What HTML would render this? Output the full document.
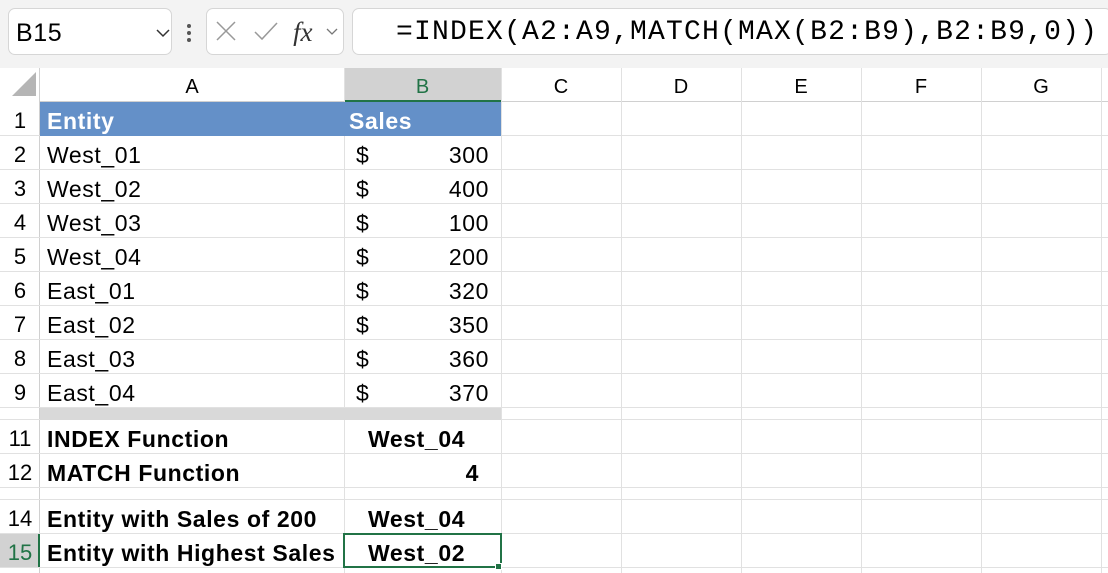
<!DOCTYPE html>
<html><head><style>
*{margin:0;padding:0;box-sizing:border-box}
body{width:1108px;height:573px;overflow:hidden;background:#fff;font-family:"Liberation Sans",sans-serif;position:relative}
.a{position:absolute}
.top{left:0;top:0;width:1108px;height:68px;background:#f3f3f3}
.box{background:#fff;border:1px solid #d6d6d6;border-radius:7px}
.vl{position:absolute;top:68px;bottom:0;width:1px;background:#e1e1e1}
.hl{position:absolute;left:0;right:0;height:1px;background:#e1e1e1}
.t{position:absolute;font-size:23px;letter-spacing:0.6px;color:#000;line-height:34px;padding-top:2px;white-space:nowrap}
.b{font-weight:bold}
.rn{position:absolute;left:0;width:40px;text-align:center;font-size:22px;line-height:34px;padding-top:2px}
.ch{position:absolute;top:68px;height:34px;line-height:34px;text-align:center;font-size:20px;padding-top:2px}
</style></head><body>
<div class="a top"></div>
<div class="a box" style="left:8px;top:8px;width:164px;height:47px"></div>
<div class="t" style="left:16px;top:14px;font-size:25px">B15</div>
<svg class="a" style="left:156px;top:28px" width="14" height="10"><path d="M1 2 L7 8 L13 2" stroke="#333" stroke-width="1.5" fill="none"/></svg>
<div class="a" style="left:187px;top:24px;width:4px;height:4px;background:#555;border-radius:2px"></div>
<div class="a" style="left:187px;top:31px;width:4px;height:4px;background:#555;border-radius:2px"></div>
<div class="a" style="left:187px;top:38px;width:4px;height:4px;background:#555;border-radius:2px"></div>
<div class="a box" style="left:206px;top:8px;width:138px;height:47px"></div>
<svg class="a" style="left:215px;top:20px" width="130" height="26"><path d="M2 2 L20 20 M20 2 L2 20" stroke="#999" stroke-width="1.5"/><path d="M40 12 L47 19 L62 3" stroke="#999" stroke-width="1.5" fill="none"/><text x="78" y="21" font-family="Liberation Serif" font-style="italic" font-size="27" fill="#333">fx</text><path d="M112 9 L117 14 L122 9" stroke="#777" stroke-width="1.3" fill="none"/></svg>
<div class="a box" style="left:352px;top:8px;width:760px;height:47px"></div>
<div class="a" style="left:396px;top:16px;font-family:'Liberation Mono',monospace;font-size:28px;letter-spacing:1.2px;line-height:34px;white-space:nowrap">=INDEX(A2:A9,MATCH(MAX(B2:B9),B2:B9,0))</div>
<div class="a" style="left:0;top:68px;width:1108px;height:34px;background:#fff;border-bottom:1px solid #d0d0d0"></div>
<div class="a" style="left:0;top:68px;width:40px;height:505px;background:#fff;border-right:1px solid #d0d0d0"></div>
<svg class="a" style="left:10px;top:70px" width="30" height="30"><path d="M26 2 L26 26 L2 26 Z" fill="#b5b5b5"/></svg>
<div class="a" style="left:344px;top:68px;width:157px;height:34px;background:#d2d2d2;border-bottom:2px solid #217346"></div>
<div class="a" style="left:0;top:534px;width:40px;height:34px;background:#d2d2d2;border-right:2px solid #217346"></div>
<div class="ch" style="left:40px;width:304px">A</div>
<div class="ch" style="left:344px;width:157px;color:#217346">B</div>
<div class="ch" style="left:501px;width:120px">C</div>
<div class="ch" style="left:621px;width:120px">D</div>
<div class="ch" style="left:741px;width:120px">E</div>
<div class="ch" style="left:861px;width:120px">F</div>
<div class="ch" style="left:981px;width:120px">G</div>
<div class="hl" style="top:135px"></div><div class="hl" style="top:169px"></div><div class="hl" style="top:203px"></div><div class="hl" style="top:237px"></div><div class="hl" style="top:271px"></div><div class="hl" style="top:305px"></div><div class="hl" style="top:339px"></div><div class="hl" style="top:373px"></div><div class="hl" style="top:407px"></div><div class="hl" style="top:419px"></div><div class="hl" style="top:453px"></div><div class="hl" style="top:487px"></div><div class="hl" style="top:499px"></div><div class="hl" style="top:533px"></div><div class="hl" style="top:567px"></div>
<div class="vl" style="left:344px"></div><div class="vl" style="left:501px"></div><div class="vl" style="left:621px"></div><div class="vl" style="left:741px"></div><div class="vl" style="left:861px"></div><div class="vl" style="left:981px"></div><div class="vl" style="left:1101px"></div>
<div class="a" style="left:40px;top:102px;width:461px;height:34px;background:#6490c8"></div>
<div class="a" style="left:40px;top:408px;width:461px;height:12px;background:#d9d9d9"></div>
<div class="rn" style="top:102px">1</div><div class="rn" style="top:136px">2</div><div class="rn" style="top:170px">3</div><div class="rn" style="top:204px">4</div><div class="rn" style="top:238px">5</div><div class="rn" style="top:272px">6</div><div class="rn" style="top:306px">7</div><div class="rn" style="top:340px">8</div><div class="rn" style="top:374px">9</div>
<div class="rn" style="top:420px">11</div><div class="rn" style="top:454px">12</div><div class="rn" style="top:500px">14</div><div class="rn" style="top:534px;color:#217346">15</div>
<div class="t b" style="left:47px;top:102px;color:#fff">Entity</div>
<div class="t b" style="left:349px;top:102px;color:#fff">Sales</div>
<div class="t" style="left:47px;top:136px">West_01</div><div class="t" style="left:47px;top:170px">West_02</div><div class="t" style="left:47px;top:204px">West_03</div><div class="t" style="left:47px;top:238px">West_04</div><div class="t" style="left:47px;top:272px">East_01</div><div class="t" style="left:47px;top:306px">East_02</div><div class="t" style="left:47px;top:340px">East_03</div><div class="t" style="left:47px;top:374px">East_04</div>
<div class="t" style="left:356px;top:136px">$</div><div class="t" style="left:356px;top:170px">$</div><div class="t" style="left:356px;top:204px">$</div><div class="t" style="left:356px;top:238px">$</div><div class="t" style="left:356px;top:272px">$</div><div class="t" style="left:356px;top:306px">$</div><div class="t" style="left:356px;top:340px">$</div><div class="t" style="left:356px;top:374px">$</div>
<div class="t" style="right:619px;top:136px">300</div><div class="t" style="right:619px;top:170px">400</div><div class="t" style="right:619px;top:204px">100</div><div class="t" style="right:619px;top:238px">200</div><div class="t" style="right:619px;top:272px">320</div><div class="t" style="right:619px;top:306px">350</div><div class="t" style="right:619px;top:340px">360</div><div class="t" style="right:619px;top:374px">370</div>
<div class="t b" style="left:47px;top:420px">INDEX Function</div>
<div class="t b" style="left:47px;top:454px">MATCH Function</div>
<div class="t b" style="left:47px;top:500px">Entity with Sales of 200</div>
<div class="t b" style="left:47px;top:534px">Entity with Highest Sales</div>
<div class="t b" style="left:368px;top:420px">West_04</div>
<div class="t b" style="right:629px;top:454px">4</div>
<div class="t b" style="left:368px;top:500px">West_04</div>
<div class="a" style="left:343px;top:533px;width:159px;height:35px;border:2px solid #217346"></div>
<div class="a" style="left:495px;top:563px;width:7px;height:7px;background:#217346;border:1px solid #fff"></div>
<div class="t b" style="left:368px;top:534px">West_02</div>
</body></html>
